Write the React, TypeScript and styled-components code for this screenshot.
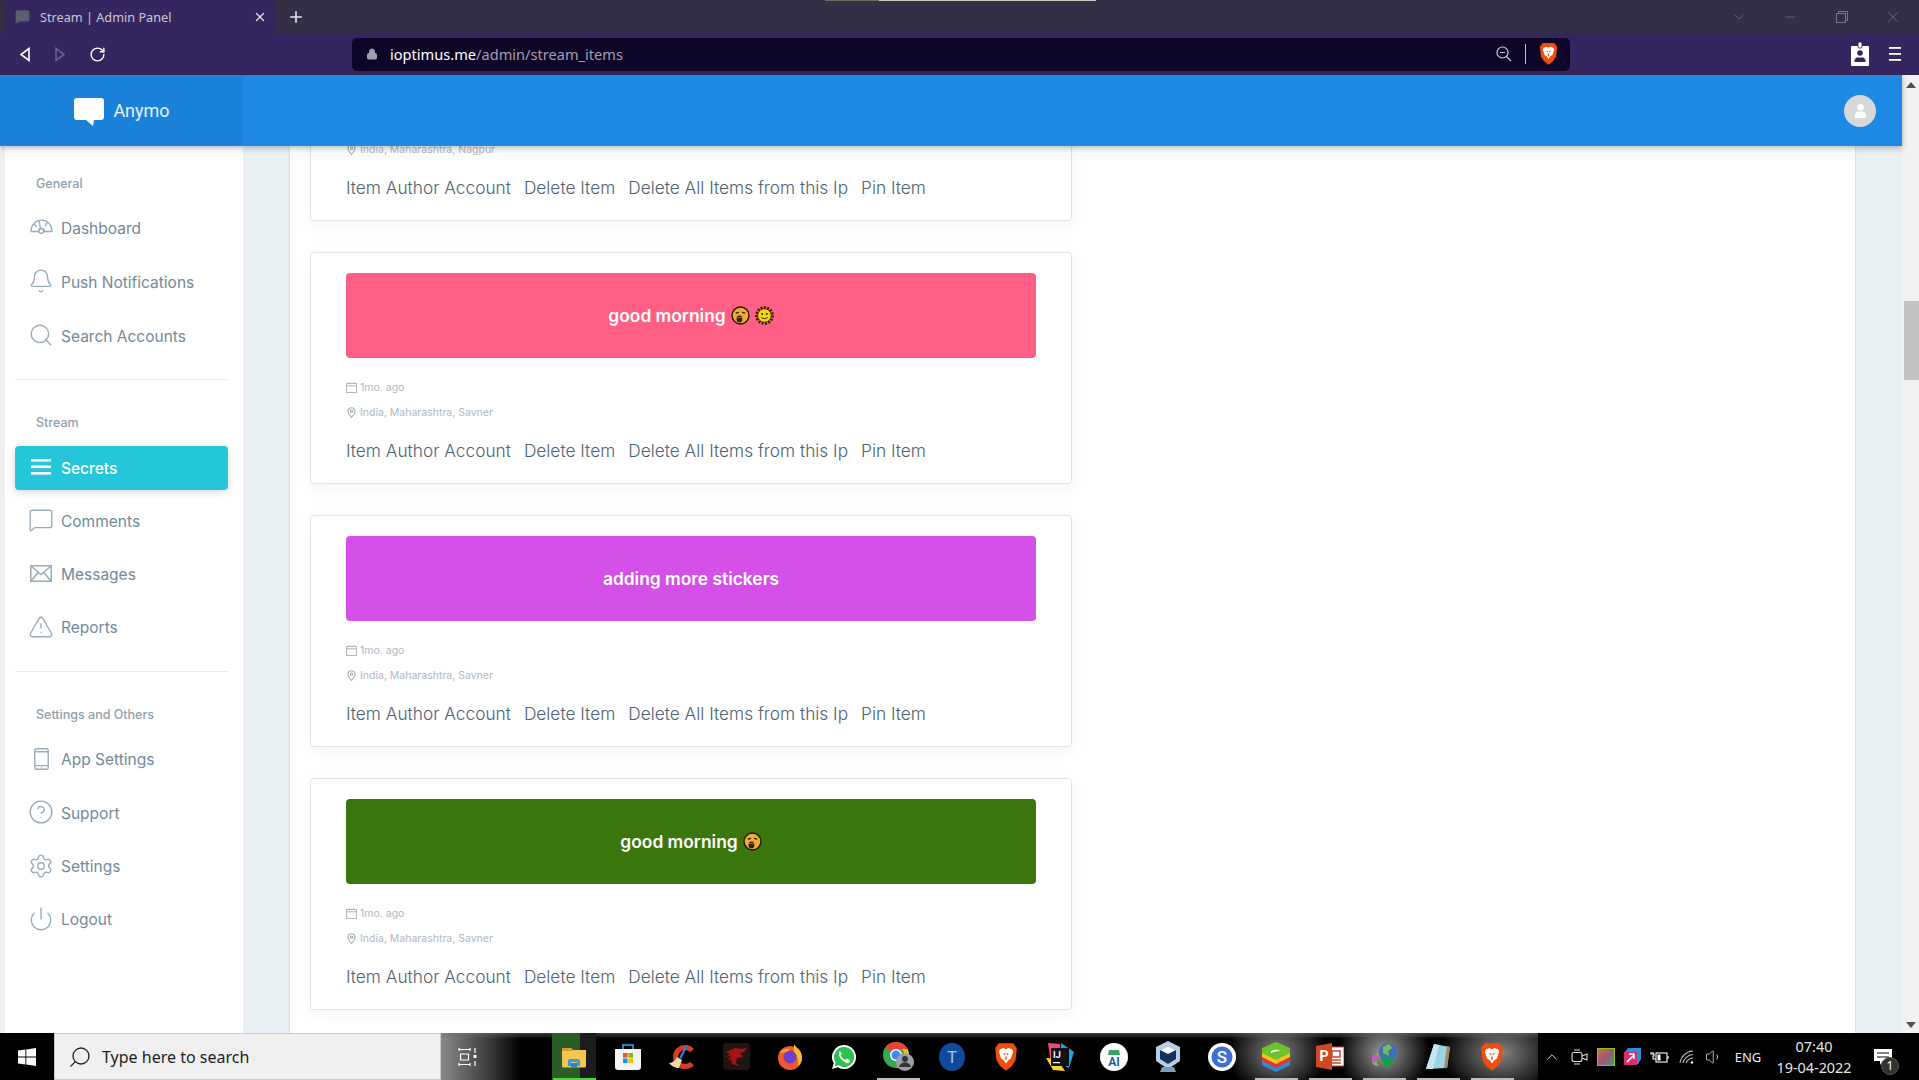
import React from 'react';
import styled, { createGlobalStyle } from 'styled-components';
import {
  AlertTriangle,
  Bell,
  ChevronDown,
  ChevronUp,
  HelpCircle,
  Lock,
  MessageSquare,
  Minus,
  Plus,
  Power,
  RotateCw,
  Search,
  Settings,
  Volume1,
  X,
} from 'lucide-react';

const UI_FONT = '"Noto Sans", "Open Sans", sans-serif';
const PAGE_FONT = 'Inter, "Noto Sans", sans-serif';

const GlobalStyle = createGlobalStyle`
  html, body {
    margin: 0;
    padding: 0;
    height: 100%;
    overflow: hidden;
    background: #fff;
  }
  #root {
    height: 100%;
  }
  * {
    box-sizing: border-box;
  }
`;

const Screen = styled.div`
  width: 100%;
  height: 100vh;
  display: flex;
  flex-direction: column;
  overflow: hidden;
  font-family: ${PAGE_FONT};
`;

/* browser chrome */

const TabBar = styled.div`
  height: 33px;
  flex: none;
  background: #352f45;
  display: flex;
  align-items: flex-end;
  padding-left: 5px;
  position: relative;
`;

const TopStrip = styled.div`
  position: absolute;
  top: 0;
  left: 825px;
  width: 271px;
  height: 1px;
  background: linear-gradient(90deg, #6b6b5f 0 54px, #c8c8c8 54px);
`;

const Tab = styled.div`
  width: 271px;
  height: 33px;
  background: #35265f;
  border-radius: 6px 6px 0 0;
  display: flex;
  align-items: center;
  padding: 0 9px 0 10px;
  gap: 10px;
  font: 12.7px ${UI_FONT};
  color: #c9c6d3;
`;

const TabTitle = styled.span`
  flex: 1;
  white-space: nowrap;
`;

const NewTab = styled.div`
  width: 40px;
  height: 33px;
  display: flex;
  align-items: center;
  justify-content: center;
  color: #e4e2ea;
`;

const WindowControls = styled.div`
  margin-left: auto;
  display: flex;
  align-items: center;
  height: 33px;
  color: #77748a;
`;

const WindowButton = styled.div`
  width: 51.5px;
  height: 33px;
  display: flex;
  align-items: center;
  justify-content: center;
`;

const Toolbar = styled.div`
  height: 42px;
  flex: none;
  background: #35265f;
  display: flex;
  align-items: center;
  padding: 0 14px 0 14px;
`;

const NavButtons = styled.div`
  display: flex;
  align-items: center;
  gap: 23px;
  width: 338px;
  padding-left: 5px;
`;

const AddressBar = styled.div`
  width: 1218px;
  height: 33px;
  background: #0d0628;
  border-radius: 5px;
  display: flex;
  align-items: center;
  padding: 0 12px 0 14px;
  font: 14.6px ${UI_FONT};
  color: #a29eb2;
`;

const Host = styled.span`
  color: #fff;
  margin-left: 12px;
`;

const AddressEnd = styled.div`
  margin-left: auto;
  display: flex;
  align-items: center;
  gap: 13px;
`;

const AddressDivider = styled.div`
  width: 1px;
  height: 20px;
  background: #c4c2cc;
`;

const ToolbarEnd = styled.div`
  margin-left: auto;
  display: flex;
  align-items: center;
  gap: 20px;
  padding-right: 4px;
`;

/* page */

const Window = styled.div`
  flex: 1;
  min-height: 0;
  display: flex;
`;

const Viewport = styled.div`
  flex: 1;
  min-width: 0;
  display: flex;
  flex-direction: column;
`;

const Scrollbar = styled.div`
  width: 17px;
  flex: none;
  background: #f1f1f1;
  display: flex;
  flex-direction: column;
  align-items: center;
  padding: 7px 0 5px;
`;

const ScrollThumb = styled.div`
  width: 15px;
  height: 79px;
  background: #c1c1c1;
  margin-top: 213px;
  align-self: flex-end;
`;

const ScrollArrow = styled.div<{ $down?: boolean }>`
  width: 0;
  height: 0;
  border-left: 5px solid transparent;
  border-right: 5px solid transparent;
  ${(p) =>
    p.$down
      ? 'border-top: 6px solid #505050; margin-top: auto;'
      : 'border-bottom: 6px solid #505050;'}
`;

const Header = styled.header`
  height: 71px;
  flex: none;
  background: #1e88e5;
  display: flex;
  align-items: center;
  justify-content: space-between;
  position: relative;
  z-index: 2;
  box-shadow: 0 2px 6px rgba(0, 0, 0, 0.28);
  padding-right: 26px;
`;

const Brand = styled.div`
  width: 243px;
  height: 100%;
  background: #1b82d9;
  display: flex;
  align-items: center;
  justify-content: center;
  gap: 8px;
  font: 18px Roboto, sans-serif;
  color: #e8f3fd;
`;

const Avatar = styled.div`
  width: 32px;
  height: 32px;
  border-radius: 50%;
  background: #d8d8d8;
  display: flex;
  align-items: center;
  justify-content: center;
`;

const Body = styled.div`
  flex: 1;
  min-height: 0;
  display: flex;
`;

const Sidebar = styled.nav`
  width: 243px;
  flex: none;
  background: #fff;
  border-left: 5px solid #efefef;
  padding: 27px 15px 0 10px;
`;

const SectionLabel = styled.div`
  font-size: 12.5px;
  font-weight: 500;
  color: #90a0ad;
  padding-left: 21px;
  line-height: 22px;
  height: 22px;
`;

const MenuList = styled.div<{ $roomy?: boolean }>`
  margin-top: ${(p) => (p.$roomy ? '11px' : '12px')};
  display: flex;
  flex-direction: column;
  gap: ${(p) => (p.$roomy ? '10px' : '9.33px')};
`;

const MenuItem = styled.div<{ $active?: boolean }>`
  height: 44px;
  border-radius: 4px;
  display: flex;
  align-items: center;
  gap: 9px;
  padding-left: 15px;
  font-size: 15.5px;
  font-weight: ${(p) => (p.$active ? 500 : 400)};
  color: ${(p) => (p.$active ? '#fff' : '#738a9b')};
  background: ${(p) => (p.$active ? '#26c6da' : 'transparent')};
  box-shadow: ${(p) => (p.$active ? '0 2px 8px rgba(0, 0, 0, 0.16)' : 'none')};
`;

const MenuIcon = styled.span`
  width: 22px;
  height: 24px;
  margin-bottom: 2px;
  display: flex;
  align-items: center;
  justify-content: center;
  flex: none;
  svg {
    flex: none;
  }
`;

const SectionDivider = styled.hr`
  border: 0;
  height: 1px;
  background: #eaeef1;
  margin: 21px 0 32px;
`;

const ContentShell = styled.div`
  flex: 1;
  min-width: 0;
  background: #e9f0f4;
  padding: 0 47px;
  display: flex;
`;

const Main = styled.main`
  flex: 1;
  min-width: 0;
  background: #fff;
  overflow: hidden;
  box-shadow: 0 0 2px rgba(0, 0, 0, 0.16);
  padding-left: 20px;
`;

const CardList = styled.div`
  width: 762px;
  margin-top: -157px;
  display: flex;
  flex-direction: column;
  gap: 31px;
`;

const Card = styled.article`
  height: 232px;
  flex: none;
  background: #fff;
  border: 1px solid #dde4ea;
  border-radius: 4px;
  box-shadow: 0 4px 14px rgba(40, 60, 80, 0.05);
  padding: 20px 35px 0;
`;

const Banner = styled.div<{ $color: string }>`
  height: 85px;
  border-radius: 4px;
  background: ${(p) => p.$color};
  display: flex;
  align-items: center;
  justify-content: center;
  gap: 5px;
  font-size: 17.4px;
  font-weight: 600;
  color: #fff;
`;

const MetaRow = styled.div`
  height: 25px;
  display: flex;
  align-items: center;
  gap: 3px;
  font-size: 10.5px;
  font-weight: 400;
  color: #afb8c4;
`;

const MetaRows = styled.div`
  margin-top: 17px;
`;

const Actions = styled.div`
  margin-top: 15px;
  display: flex;
  gap: 13px;
  font-size: 17.3px;
  font-weight: 300;
  color: #4d6272;
  white-space: nowrap;
`;

/* windows taskbar */

const Taskbar = styled.footer`
  height: 47px;
  flex: none;
  display: flex;
  align-items: stretch;
  color: #fff;
  font-family: ${UI_FONT};
  background:
    linear-gradient(180deg, rgba(110, 110, 110, 0.55) 0, rgba(0, 0, 0, 0) 6px),
    radial-gradient(ellipse 50px 44px at 1277px 20px, #808080, rgba(0, 0, 0, 0) 100%),
    radial-gradient(ellipse 46px 44px at 1384px 20px, #9a9a9a, rgba(0, 0, 0, 0) 100%),
    radial-gradient(ellipse 60px 44px at 1500px 20px, #858585, rgba(0, 0, 0, 0) 100%),
    linear-gradient(90deg, #000 0 441px, #8a8a8a 441px, #3a3a3a 490px, #000 520px, #000 1240px, #000);
`;

const StartButton = styled.div`
  width: 54px;
  flex: none;
  background: #000;
  display: flex;
  align-items: center;
  justify-content: center;
`;

const SearchBox = styled.div`
  width: 387px;
  flex: none;
  background: #f0f0f0;
  border: 1px solid #c8c8c8;
  display: flex;
  align-items: center;
  gap: 10px;
  padding-left: 13px;
  font-size: 16px;
  color: #222;
`;

const SearchGlyph = styled(Search)`
  transform: scaleX(-1);
`;

const TaskView = styled.div`
  width: 54px;
  flex: none;
  margin-right: 52px;
  display: flex;
  align-items: center;
  justify-content: center;
`;

const AppSlot = styled.div<{ $running?: boolean; $focused?: boolean }>`
  width: 54px;
  flex: none;
  display: flex;
  align-items: center;
  justify-content: center;
  position: relative;
  ${(p) => p.$focused && 'background: linear-gradient(90deg, transparent 5px, #2c5c26 5px, #2c5c26 33px, #1c1c1c 33px, #1c1c1c 49px, transparent 49px);'}
  &::after {
    content: '';
    position: absolute;
    left: 6px;
    right: 5px;
    bottom: 0;
    height: 2px;
    background: ${(p) => (p.$focused ? '#4fd33f' : p.$running ? '#bdbdbd' : 'transparent')};
  }
`;

const Tray = styled.div`
  width: 381px;
  flex: none;
  background: #000;
  display: flex;
  align-items: center;
  margin-left: auto;
`;

const TrayIcon = styled.div`
  width: 27px;
  flex: none;
  display: flex;
  align-items: center;
  justify-content: center;
`;

const TrayLang = styled.div`
  width: 42px;
  text-align: center;
  font-size: 13px;
  color: #eee;
`;

const Clock = styled.div`
  width: 90px;
  text-align: center;
  font-size: 14.4px;
  line-height: 21px;
  color: #e6e6e6;
`;

const Notifications = styled.div`
  flex: 1;
  align-self: stretch;
  display: flex;
  align-items: center;
  justify-content: center;
  padding-right: 12px;
  position: relative;
`;

const NotifyCount = styled.span`
  position: absolute;
  left: 22px;
  top: 24px;
  width: 18px;
  height: 18px;
  border-radius: 50%;
  background: #333;
  border: 1px solid #555;
  font-size: 12px;
  line-height: 16px;
  text-align: center;
  color: #fff;
`;

/* drawn icons */

const BubbleLogo = () => (
  <svg width="32" height="32" viewBox="0 0 32 32">
    <path d="M4 3h24a3 3 0 0 1 3 3v16a3 3 0 0 1-3 3h-7l-1 6-7-6H4a3 3 0 0 1-3-3V6a3 3 0 0 1 3-3z" fill="#fff" />
  </svg>
);

const GaugeIcon = () => (
  <svg width="23" height="16" viewBox="0 0 23 16" fill="none" stroke="#9aabb8" strokeWidth="1.3">
    <path d="M1 12.5C1 6 5.5 1.2 11.5 1.2S22 6 22 12.5H14.5a3 3 0 0 0-6 0z" />
    <circle cx="11.2" cy="12" r="2.4" />
    <path d="M9 1.5L10.5 9.5M4 5l3 3M17 3.5l-2 4" />
  </svg>
);

const EnvelopeIcon = () => (
  <svg width="22" height="17" viewBox="0 0 22 17" fill="none" stroke="#9aabb8" strokeWidth="1.5">
    <rect x="0.8" y="0.8" width="20.4" height="15.4" />
    <path d="M1 1l10 8.5L21 1M1 16l7.5-9M21 16l-7.5-9" />
  </svg>
);

const PhoneIcon = () => (
  <svg width="15" height="22" viewBox="0 0 15 22" fill="none" stroke="#9aabb8" strokeWidth="1.4">
    <rect x="0.8" y="0.8" width="13.4" height="20.400" rx="1.5" />
    <path d="M1 3.800h13M1 17.600h13" />
    <circle cx="7.500" cy="19.500" r="0.600" fill="#9aabb8" stroke="none" />
  </svg>
);

const ListIcon = () => (
  <svg width="20" height="16" viewBox="0 0 20 16" fill="#fff">
    <rect y="0" width="20" height="2.6" />
    <rect y="6.5" width="20" height="2.6" />
    <rect y="13" width="20" height="2.6" />
  </svg>
);

const CalendarIcon = () => (
  <svg width="11" height="11" viewBox="0 0 11 11" fill="none" stroke="#afb8c4" strokeWidth="1">
    <rect x="0.5" y="1.5" width="10" height="9" />
    <path d="M0.5 3.8h10M3 0v2M8 0v2" />
  </svg>
);

const PinIcon = () => (
  <svg width="11" height="11" viewBox="0 0 11 11" fill="none" stroke="#a3adb8" strokeWidth="1.1">
    <path d="M5.5 10.5C3 7.5 2 6 2 4.2a3.5 3.5 0 0 1 7 0C9 6 8 7.5 5.5 10.5z" />
    <circle cx="5.5" cy="4.2" r="1.2" />
  </svg>
);

const SleepyFace = () => (
  <svg width="19" height="19" viewBox="0 0 18 18">
    <circle cx="9" cy="9" r="8" fill="#f2ac35" stroke="#1e1600" strokeWidth="1.3" />
    <path d="M4.500 6.800l3-.8M13.500 6.800l-3-.8" stroke="#1e1600" strokeWidth="1.2" />
    <ellipse cx="8" cy="12.300" rx="2.800" ry="3.200" fill="#3a2000" />
    <path d="M5.600 11h5" stroke="#c98a2a" strokeWidth="0.7" />
  </svg>
);

const SunFace = () => (
  <svg width="19" height="19" viewBox="0 0 18 18">
    <circle cx="9" cy="9" r="7.400" fill="none" stroke="#2a2200" strokeWidth="3" strokeDasharray="1.800 1.300" />
    <circle cx="9" cy="9" r="6.400" fill="#f7d708" stroke="#2a2200" strokeWidth="0.7" />
    <circle cx="6.800" cy="7.600" r="0.900" fill="#2a2200" />
    <circle cx="11.200" cy="7.600" r="0.900" fill="#2a2200" />
    <path d="M6 10.800c1.600 1.600 4.400 1.600 6 0" fill="none" stroke="#2a2200" strokeWidth="0.900" />
  </svg>
);

const BraveShield = ({ size = 20 }: { size?: number }) => (
  <svg width={size} height={size * 1.25} viewBox="0 0 20 25">
    <path d="M4 1h12l3 4-1 10-3 5-5 4-5-4-3-5L1 5z" fill="#f04e0d" />
    <path d="M5 6l3-1 2 1 2-1 3 1 1 2-2 6-2 1-2 3-2-3-2-1-2-6z" fill="#fff" />
    <path d="M8 10h1.4M10.6 10H12M10 12v3" stroke="#f04e0d" strokeWidth="1.2" />
  </svg>
);

const WindowsLogo = () => (
  <svg width="18" height="18" viewBox="0 0 18 18" fill="#fff">
    <path d="M0 2.6L7.4 1.5v7H0zM8.3 1.4L18 0v8.5H8.3zM0 9.4h7.4v7L0 15.4zM8.3 9.4H18V18l-9.7-1.4z" />
  </svg>
);

const TaskViewIcon = () => (
  <svg width="20" height="20" viewBox="0 0 20 20" fill="none" stroke="#fff" strokeWidth="1.2">
    <path d="M1 2.5h11M1 17.5h11M2.5 7h8v6h-8zM1 1v3M12 1v3M1 16v3M12 16v3M17 1v5M17 14v5" />
    <rect x="15.5" y="8" width="3" height="3" fill="#fff" stroke="none" />
  </svg>
);

const ExplorerIcon = () => (
  <svg width="26" height="22" viewBox="0 0 26 22">
    <path d="M1 2h9l2 2h13v16a1.5 1.5 0 0 1-1.5 1.5h-21A1.5 1.5 0 0 1 1 20z" fill="#f5c451" />
    <path d="M1 2h9l2 3H1z" fill="#d99a2c" />
    <path d="M7 20v-5a2 2 0 0 1 2-2h8a2 2 0 0 1 2 2v5h-3v-4h-6v4z" fill="#2f9fe3" />
    <rect x="10" y="17" width="6" height="4.5" fill="#2f7fc4" />
  </svg>
);

const StoreIcon = () => (
  <svg width="26" height="27" viewBox="0 0 26 27">
    <path d="M8 6V2h10v4" fill="none" stroke="#2aa8e8" strokeWidth="1.6" />
    <path d="M0 6h26v18a3 3 0 0 1-3 3H3a3 3 0 0 1-3-3z" fill="#f5f5f5" />
    <rect x="8" y="10" width="4.6" height="4.6" fill="#f25022" />
    <rect x="13.4" y="10" width="4.6" height="4.6" fill="#7fba00" />
    <rect x="8" y="15.4" width="4.6" height="4.6" fill="#00a4ef" />
    <rect x="13.4" y="15.4" width="4.6" height="4.6" fill="#ffb900" />
  </svg>
);

const CCleanerIcon = () => (
  <svg width="28" height="26" viewBox="0 0 28 26">
    <path d="M26 5a12 12 0 1 0 0 16l-4-3a7 7 0 1 1 0-10z" fill="#d83a26" />
    <path d="M18 1l2 1-7 13-2-1z" fill="#2f7fd8" />
    <path d="M9 13l5 3-3 8c-3 0-8-2-10-5 3 0 6-2 8-6z" fill="#eed9a8" />
  </svg>
);

const MsiIcon = () => (
  <svg width="27" height="27" viewBox="0 0 27 27">
    <rect width="27" height="27" rx="4" fill="#231414" />
    <path d="M3 9l9-4 6 1 6-1-3 4-4 1 3 4-6 1-1 5 3 3-7-2-1-5-4 2 4-5-6 1 5-3z" fill="#a31414" />
  </svg>
);

const FirefoxIcon = () => (
  <svg width="26" height="26" viewBox="0 0 26 26">
    <circle cx="13" cy="14" r="12" fill="#f1582c" />
    <path d="M17 0c2 4 8 6 8 14 0 4-2 6-4 8 1-6-1-11-4-14z" fill="#fdb92c" />
    <circle cx="13" cy="13" r="6.5" fill="#6f3fc8" />
    <path d="M2 9c3-4 7-5 11-4l-3 3z" fill="#fd9e2c" />
  </svg>
);

const WhatsappIcon = () => (
  <svg width="26" height="26" viewBox="0 0 26 26">
    <path d="M13 1a12 12 0 0 0-10.2 18.3L1 25l5.9-1.7A12 12 0 1 0 13 1z" fill="#fff" />
    <path d="M13 3a10 10 0 0 0-8.4 15.4L3.6 22.4l4-1.1A10 10 0 1 0 13 3z" fill="#2fc14f" />
    <path d="M9 7c-2 1.5-1.500 5 1.500 8.500S17 20 19 18l-.5-2-3-1.500-1.300 1.500c-2-1-3.700-2.700-4.500-4.700L11 10.500 9.500 7.500z" fill="#fff" />
  </svg>
);

const ChromeIcon = () => (
  <svg width="31" height="29" viewBox="0 0 31 29">
    <circle cx="13" cy="13" r="13" fill="#34a853" />
    <path d="M13 0a13 13 0 0 1 11.500 7H13a6 6 0 0 0-5.500 3.500L2.600 5A13 13 0 0 1 13 0z" fill="#ea4335" />
    <path d="M24.500 7A13 13 0 0 1 13 26l5.500-9a6 6 0 0 0 0-10z" fill="#fbbc05" />
    <circle cx="13" cy="13" r="6" fill="#fff" />
    <circle cx="13" cy="13" r="4.500" fill="#4285f4" />
    <circle cx="22" cy="20" r="9" fill="#9aa0a8" />
    <circle cx="22" cy="17" r="3" fill="#2f3338" />
    <path d="M16 25c1-3.500 3.500-4.500 6-4.500s5 1 6 4.500z" fill="#2f3338" />
  </svg>
);

const TorIcon = () => (
  <svg width="26" height="28" viewBox="0 0 26 28">
    <ellipse cx="13" cy="14" rx="13" ry="14" fill="#0f4a9e" />
    <text x="13" y="20" textAnchor="middle" fontSize="17" fontWeight="400" fontFamily="Roboto, sans-serif" fill="#a9c6ea">
      T
    </text>
  </svg>
);

const SimplenoteIcon = () => (
  <svg width="28" height="28" viewBox="0 0 28 28">
    <circle cx="14" cy="14" r="14" fill="#fff" />
    <circle cx="14" cy="14" r="10.500" fill="#3d6fd6" />
    <text x="14" y="20" textAnchor="middle" fontSize="17" fontWeight="500" fontFamily="Roboto, sans-serif" fill="#fff">
      S
    </text>
  </svg>
);

const IdeaIcon = () => (
  <svg width="30" height="30" viewBox="0 0 30 30">
    <path d="M3 1l12 1 1 14-10 6z" fill="#f0478c" />
    <path d="M16 1l13 9-5 16-8-4z" fill="#1fa4ea" />
    <path d="M1 16l7 12 12 1-8-12z" fill="#f8d334" />
    <rect x="6" y="6" width="18" height="18" fill="#111" />
    <text x="8" y="16" fontSize="9" fontWeight="700" fontFamily="Roboto, sans-serif" fill="#fff">
      IJ
    </text>
    <rect x="8" y="20" width="7" height="1.200" fill="#fff" />
  </svg>
);

const StudioIcon = () => (
  <svg width="28" height="30" viewBox="0 0 28 30">
    <circle cx="14" cy="15" r="14" fill="#fff" />
    <path d="M9 8h10l1 5H8z" fill="#3ba55d" />
    <text x="14" y="24" textAnchor="middle" fontSize="12" fontWeight="700" fontFamily="Roboto, sans-serif" fill="#1b5fa8">
      AI
    </text>
  </svg>
);

const VBoxIcon = () => (
  <svg width="26" height="31" viewBox="0 0 26 31">
    <path d="M13 0l12 6v14l-12 8L1 20V6z" fill="#b9cde4" />
    <path d="M13 5L5 9v9l8 5 8-5V9z" fill="#12325e" />
    <path d="M13 5l8 4-8 4-8-4z" fill="#f4f7fb" />
    <path d="M7 26h12l2 5H5z" fill="#7f9cbd" />
  </svg>
);

const StacksIcon = () => (
  <svg width="30" height="30" viewBox="0 0 30 30">
    <path d="M1 18l14-9 14 9v5L15 30 1 23z" fill="#2a8fd8" />
    <path d="M1 14l14-9 14 9v5l-14 7-14-7z" fill="#e0362c" />
    <path d="M1 10l14-8 14 8v5l-14 7-14-7z" fill="#f4c320" />
    <path d="M1 6l14-6 14 6v5l-14 7-14-7z" fill="#6cc32a" />
    <path d="M10 9l9-3-5 2h6l-10 3z" fill="#fff" />
  </svg>
);

const PowerPointIcon = () => (
  <svg width="28" height="27" viewBox="0 0 28 27">
    <rect x="12" y="4" width="16" height="19" fill="#fff" stroke="#d24726" />
    <path d="M16 8h8v6h-8zM16 17h9M16 20h9" fill="none" stroke="#d24726" strokeWidth="1.500" />
    <path d="M0 3l16-3v27L0 24z" fill="#d24726" />
    <text x="8" y="18" textAnchor="middle" fontSize="14" fontWeight="700" fontFamily="Roboto, sans-serif" fill="#fff">
      P
    </text>
  </svg>
);

const IdmIcon = () => (
  <svg width="28" height="28" viewBox="0 0 28 28">
    <path d="M8 10a10 10 0 0 0-6 8c0 3 3 5 7 5-2-2-3-4-2-6z" fill="#7dc343" />
    <path d="M4 11c-3 3-3 7 0 9l3-2c-1-2 0-4 2-5z" fill="#c857c0" />
    <circle cx="18" cy="9" r="9" fill="#3f70b8" />
    <path d="M13 4l6-3 3 4-4 3 1 5-6-3z" fill="#7dbb52" />
    <path d="M10 14l17 2-6 3-3 8z" fill="#0ea14a" />
  </svg>
);

const NotepadIcon = () => (
  <svg width="26" height="28" viewBox="0 0 26 28">
    <path d="M9 1l16 3-3 21-21 1z" fill="#9bd3e6" />
    <path d="M22 3l3 1-3 21h-3z" fill="#a98658" />
    <path d="M1 26L9 1l5 1-6 24z" fill="#c3e6f1" />
  </svg>
);

const MeetIcon = () => (
  <svg width="18" height="18" viewBox="0 0 18 18" fill="none" stroke="#ddd" strokeWidth="1.100">
    <rect x="2" y="4.500" width="10" height="9" rx="2" />
    <path d="M12 8l5-2v6l-5-2M4 2h6M4 16h6" />
  </svg>
);

const ChartIcon = () => (
  <svg width="18" height="18" viewBox="0 0 18 18">
    <defs>
      <linearGradient id="heat" x1="0" y1="0" x2="1" y2="1">
        <stop offset="0" stopColor="#b4823c" />
        <stop offset="0.5" stopColor="#a0567c" />
        <stop offset="1" stopColor="#3c9c78" />
      </linearGradient>
    </defs>
    <rect x="0.500" y="0.500" width="17" height="17" fill="url(#heat)" stroke="#8bc400" />
  </svg>
);

const BoxArrowIcon = () => (
  <svg width="17" height="17" viewBox="0 0 17 17">
    <path d="M4 0h13v11l-3 5H1V4z" fill="#2d8ce0" />
    <rect x="0" y="4" width="13" height="13" fill="#d62d72" />
    <path d="M3 14l7-7M5 6h5v5" stroke="#fff" strokeWidth="1.600" fill="none" />
  </svg>
);

const BatteryIcon = () => (
  <svg width="19" height="13" viewBox="0 0 19 13" fill="none" stroke="#fff" strokeWidth="1.100">
    <rect x="6" y="3" width="11" height="9" fill="#000" />
    <rect x="7.500" y="4.500" width="3" height="6" fill="#fff" stroke="none" />
    <path d="M18 6v3M1 2v2M3 2v2M0.500 4h3.500v2H3v3h3" />
  </svg>
);

const WifiIcon = () => (
  <svg width="16" height="14" viewBox="0 0 16 14" fill="none" stroke="#bbb" strokeWidth="1.100">
    <path d="M1 13A14 14 0 0 1 14 1M4 13A11 11 0 0 1 14 4.500M7 13a8 8 0 0 1 7-5" />
    <circle cx="13" cy="12.500" r="1.200" fill="#fff" stroke="none" />
  </svg>
);

const ActionCenterIcon = () => (
  <svg width="18" height="16" viewBox="0 0 18 16">
    <path d="M0 0h18v12H9l-3 4v-4H0z" fill="#fff" />
    <path d="M3 4h12M3 8h12" stroke="#000" strokeWidth="1" />
  </svg>
);

const PersonIcon = ({ fill, size = 16 }: { fill: string; size?: number }) => (
  <svg width={size} height={size} viewBox="0 0 16 16" fill={fill}>
    <circle cx="8" cy="4.500" r="3.500" />
    <path d="M2 16v-3c0-2.500 2-4 4-4h4c2 0 4 1.500 4 4v3z" />
  </svg>
);

const BadgeIcon = () => (
  <svg width="18" height="24" viewBox="0 0 18 24">
    <path d="M1 4h16a1 1 0 0 1 1 1v18a1 1 0 0 1-1 1H1a1 1 0 0 1-1-1V5a1 1 0 0 1 1-1z" fill="#fff" />
    <rect x="7" y="0" width="4" height="6" rx="1.500" fill="#fff" stroke="#35265f" strokeWidth="1" />
    <circle cx="9" cy="11" r="2.800" fill="#35265f" />
    <path d="M3.500 20v-1.500c0-1.500 1.500-3 3-3h5c1.500 0 3 1.500 3 3V20z" fill="#35265f" />
  </svg>
);

const BurgerIcon = () => (
  <svg width="12" height="14" viewBox="0 0 12 14" fill="#fff">
    <rect y="0" width="12" height="1.800" />
    <rect y="6" width="12" height="1.800" />
    <rect y="12" width="12" height="1.800" />
  </svg>
);

const ZoomOutIcon = () => (
  <svg width="16" height="16" viewBox="0 0 16 16" fill="none" stroke="#d0ceda" strokeWidth="1.200">
    <circle cx="6.500" cy="6.500" r="5.500" />
    <path d="M4 6.500h5M10.500 10.500L15 15" />
  </svg>
);

const NavArrow = ({ dim, flip }: { dim?: boolean; flip?: boolean }) => (
  <svg width="12" height="15" viewBox="0 0 12 15" fill="none" stroke={dim ? '#66608a' : '#fff'} strokeWidth="1.600">
    <path d={flip ? 'M2 1.500l8 6-8 6z' : 'M10 1.500l-8 6 8 6z'} />
  </svg>
);

const iconProps = { size: 26, color: '#9aabb8', strokeWidth: 1.25 };

const sections = [
  {
    label: 'General',
    roomy: true,
    items: [
      { name: 'Dashboard', icon: <GaugeIcon /> },
      { name: 'Push Notifications', icon: <Bell {...iconProps} /> },
      { name: 'Search Accounts', icon: <Search {...iconProps} /> },
    ],
  },
  {
    label: 'Stream',
    items: [
      { name: 'Secrets', icon: <ListIcon />, active: true },
      { name: 'Comments', icon: <MessageSquare {...iconProps} /> },
      { name: 'Messages', icon: <EnvelopeIcon /> },
      { name: 'Reports', icon: <AlertTriangle {...iconProps} /> },
    ],
  },
  {
    label: 'Settings and Others',
    items: [
      { name: 'App Settings', icon: <PhoneIcon /> },
      { name: 'Support', icon: <HelpCircle {...iconProps} /> },
      { name: 'Settings', icon: <Settings {...iconProps} /> },
      { name: 'Logout', icon: <Power {...iconProps} /> },
    ],
  },
];

const cards = [
  { color: '#ff5f84', text: '', emoji: [], age: '1mo. ago', place: 'India, Maharashtra, Nagpur' },
  { color: '#ff5f84', text: 'good morning', emoji: [<SleepyFace key="a" />, <SunFace key="b" />], age: '1mo. ago', place: 'India, Maharashtra, Savner' },
  { color: '#d550e8', text: 'adding more stickers', emoji: [], age: '1mo. ago', place: 'India, Maharashtra, Savner' },
  { color: '#3a760c', text: 'good morning', emoji: [<SleepyFace key="a" />], age: '1mo. ago', place: 'India, Maharashtra, Savner' },
];

const apps = [
  { icon: <ExplorerIcon />, focused: true },
  { icon: <StoreIcon /> },
  { icon: <CCleanerIcon /> },
  { icon: <MsiIcon /> },
  { icon: <FirefoxIcon /> },
  { icon: <WhatsappIcon /> },
  { icon: <ChromeIcon />, running: true },
  { icon: <TorIcon /> },
  { icon: <BraveShield size={24} /> },
  { icon: <IdeaIcon /> },
  { icon: <StudioIcon /> },
  { icon: <VBoxIcon /> },
  { icon: <SimplenoteIcon /> },
  { icon: <StacksIcon />, running: true },
  { icon: <PowerPointIcon />, running: true },
  { icon: <IdmIcon />, running: true },
  { icon: <NotepadIcon />, running: true },
  { icon: <BraveShield size={24} />, running: true },
];

function App() {
  return (
    <Screen>
      <GlobalStyle />
      <TabBar>
        <TopStrip />
        <Tab>
          <MessageSquare size={15} color="#5b5f70" fill="#5b5f70" />
          <TabTitle>Stream | Admin Panel</TabTitle>
          <X size={14} color="#e0dfe6" strokeWidth={2.4} />
        </Tab>
        <NewTab>
          <Plus size={18} strokeWidth={2.2} />
        </NewTab>
        <WindowControls>
          <WindowButton>
            <ChevronDown size={16} strokeWidth={1} />
          </WindowButton>
          <WindowButton>
            <Minus size={16} strokeWidth={1} />
          </WindowButton>
          <WindowButton>
            <svg width="12" height="12" viewBox="0 0 12 12" fill="none" stroke="#77748a">
              <rect x="0.500" y="2.500" width="9" height="9" />
              <path d="M2.500 2.500v-2h9v9h-2" />
            </svg>
          </WindowButton>
          <WindowButton>
            <X size={18} strokeWidth={1} />
          </WindowButton>
        </WindowControls>
      </TabBar>
      <Toolbar>
        <NavButtons>
          <NavArrow />
          <NavArrow dim flip />
          <RotateCw size={17} color="#fff" strokeWidth={2} />
        </NavButtons>
        <AddressBar>
          <Lock size={12} color="#a29eb2" fill="#a29eb2" />
          <Host>ioptimus.me</Host>/admin/stream_items
          <AddressEnd>
            <ZoomOutIcon />
            <AddressDivider />
            <BraveShield size={19} />
          </AddressEnd>
        </AddressBar>
        <ToolbarEnd>
          <BadgeIcon />
          <BurgerIcon />
        </ToolbarEnd>
      </Toolbar>
      <Window>
        <Viewport>
          <Header>
            <Brand>
              <BubbleLogo />
              Anymo
            </Brand>
            <Avatar>
              <PersonIcon fill="#fff" size={15} />
            </Avatar>
          </Header>
          <Body>
            <Sidebar>
              {sections.map((section, index) => (
                <React.Fragment key={section.label}>
                  {index > 0 && <SectionDivider />}
                  <SectionLabel>{section.label}</SectionLabel>
                  <MenuList $roomy={section.roomy}>
                    {section.items.map((item) => (
                      <MenuItem key={item.name} $active={'active' in item}>
                        <MenuIcon>{item.icon}</MenuIcon>
                        {item.name}
                      </MenuItem>
                    ))}
                  </MenuList>
                </React.Fragment>
              ))}
            </Sidebar>
            <ContentShell>
              <Main>
                <CardList>
                  {cards.map((card, index) => (
                    <Card key={index}>
                      <Banner $color={card.color}>
                        {card.text}
                        {card.emoji}
                      </Banner>
                      <MetaRows>
                        <MetaRow>
                          <CalendarIcon />
                          {card.age}
                        </MetaRow>
                        <MetaRow>
                          <PinIcon />
                          {card.place}
                        </MetaRow>
                      </MetaRows>
                      <Actions>
                        <span>Item Author Account</span>
                        <span>Delete Item</span>
                        <span>Delete All Items from this Ip</span>
                        <span>Pin Item</span>
                      </Actions>
                    </Card>
                  ))}
                </CardList>
              </Main>
            </ContentShell>
          </Body>
        </Viewport>
        <Scrollbar>
          <ScrollArrow />
          <ScrollThumb />
          <ScrollArrow $down />
        </Scrollbar>
      </Window>
      <Taskbar>
        <StartButton>
          <WindowsLogo />
        </StartButton>
        <SearchBox>
          <SearchGlyph size={24} color="#222" strokeWidth={1.3} />
          Type here to search
        </SearchBox>
        <TaskView>
          <TaskViewIcon />
        </TaskView>
        {apps.map((app, index) => (
          <AppSlot key={index} $focused={app.focused} $running={app.running}>
            {app.icon}
          </AppSlot>
        ))}
        <Tray>
          <TrayIcon>
            <ChevronUp size={18} color="#eee" strokeWidth={1.2} />
          </TrayIcon>
          <TrayIcon>
            <MeetIcon />
          </TrayIcon>
          <TrayIcon>
            <ChartIcon />
          </TrayIcon>
          <TrayIcon>
            <BoxArrowIcon />
          </TrayIcon>
          <TrayIcon>
            <BatteryIcon />
          </TrayIcon>
          <TrayIcon>
            <WifiIcon />
          </TrayIcon>
          <TrayIcon>
            <Volume1 size={18} color="#ddd" strokeWidth={1.1} />
          </TrayIcon>
          <TrayLang>ENG</TrayLang>
          <Clock>
            07:40
            <br />
            19-04-2022
          </Clock>
          <Notifications>
            <ActionCenterIcon />
            <NotifyCount>1</NotifyCount>
          </Notifications>
        </Tray>
      </Taskbar>
    </Screen>
  );
}

export default App;
